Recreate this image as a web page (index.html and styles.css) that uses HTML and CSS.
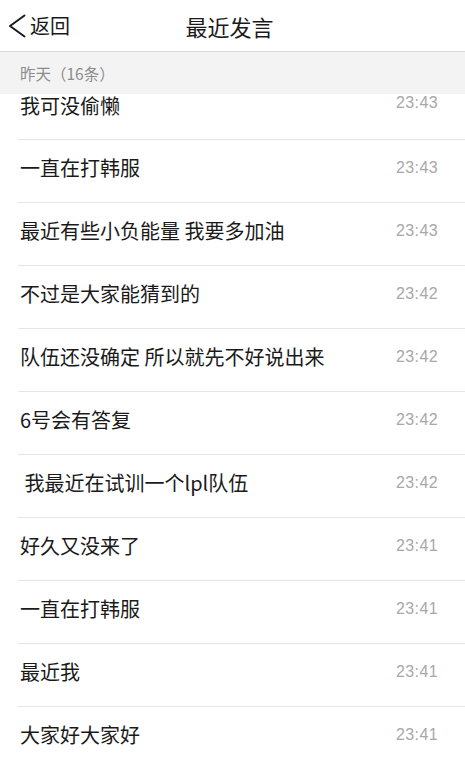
FILE: index.html
```html
<!DOCTYPE html>
<html lang="zh-CN">
<head>
<meta charset="utf-8">
<title>最近发言</title>
<link rel="stylesheet" href="styles.css">
</head>
<body>
<div class="page">
  <header class="nav">
    <div class="back">
      <svg class="chev" width="18" height="24" viewBox="0 0 18 24"><polyline points="16.5,1.5 2,12 16.5,22.5" fill="none" stroke="#1a1a1a" stroke-width="2" stroke-linecap="round" stroke-linejoin="round"/></svg>
      <span class="back-text">返回</span>
    </div>
    <div class="title">最近发言</div>
    <div class="spacer"></div>
  </header>
  <div class="section">昨天（16条）</div>
  <div class="viewport">
    <ul class="list">
      <li class="row row-partial"><span class="msg">我可没偷懒</span><span class="time time-up">23:43</span></li>
      <li class="row"><span class="msg">一直在打韩服</span><span class="time">23:43</span></li>
      <li class="row"><span class="msg">最近有些小负能量 我要多加油</span><span class="time">23:43</span></li>
      <li class="row"><span class="msg">不过是大家能猜到的</span><span class="time">23:42</span></li>
      <li class="row"><span class="msg">队伍还没确定 所以就先不好说出来</span><span class="time">23:42</span></li>
      <li class="row"><span class="msg">6号会有答复</span><span class="time">23:42</span></li>
      <li class="row"><span class="msg">&nbsp;我最近在试训一个lpl队伍</span><span class="time">23:42</span></li>
      <li class="row"><span class="msg">好久又没来了</span><span class="time">23:41</span></li>
      <li class="row"><span class="msg">一直在打韩服</span><span class="time">23:41</span></li>
      <li class="row"><span class="msg">最近我</span><span class="time">23:41</span></li>
      <li class="row"><span class="msg">大家好大家好</span><span class="time">23:41</span></li>
    </ul>
  </div>
</div>
</body>
</html>
```

FILE: styles.css
```css
html, body {
  margin: 0;
  padding: 0;
  background: #ffffff;
}

body {
  font-family: "Noto Sans CJK SC", "Noto Sans", sans-serif;
  color: #1a1a1a;
}

.page {
  width: 465px;
  height: 760px;
  overflow: hidden;
  display: flex;
  flex-direction: column;
}

.nav {
  height: 51px;
  flex: 0 0 auto;
  display: grid;
  grid-template-columns: 1fr auto 1fr;
  align-items: center;
  border-bottom: 1px solid #dadada;
  background: #ffffff;
}

.back {
  display: flex;
  align-items: center;
  gap: 4px;
  padding-left: 8px;
}

.chev {
  display: block;
}

.back-text {
  font-size: 20px;
  line-height: 24px;
  color: #1a1a1a;
}

.title {
  font-size: 22px;
  line-height: 26px;
  color: #1a1a1a;
  margin-right: 6px;
}

.section {
  height: 42px;
  flex: 0 0 auto;
  display: flex;
  align-items: center;
  padding-left: 20px;
  background: #f3f3f4;
  font-size: 15.5px;
  color: #8c8c8c;
}

.viewport {
  flex: 1 1 auto;
}

.list {
  list-style: none;
  margin: 0;
  padding: 0;
}

.row {
  display: flex;
  justify-content: space-between;
  align-items: center;
  height: 24px;
  padding: 16px 27px 22px 2px;
  margin-left: 18px;
  border-bottom: 1px solid #e6e6e6;
}

.row-partial {
  padding-top: 0;
  padding-bottom: 21px;
}

.msg {
  font-size: 20px;
  line-height: 24px;
  color: #1a1a1a;
  white-space: nowrap;
}

.time {
  font-family: "Liberation Sans", Arial, sans-serif;
  font-size: 16px;
  letter-spacing: 0.4px;
  line-height: 24px;
  color: #a8a8a8;
}

.time-up {
  align-self: flex-start;
  line-height: 18px;
}
```
